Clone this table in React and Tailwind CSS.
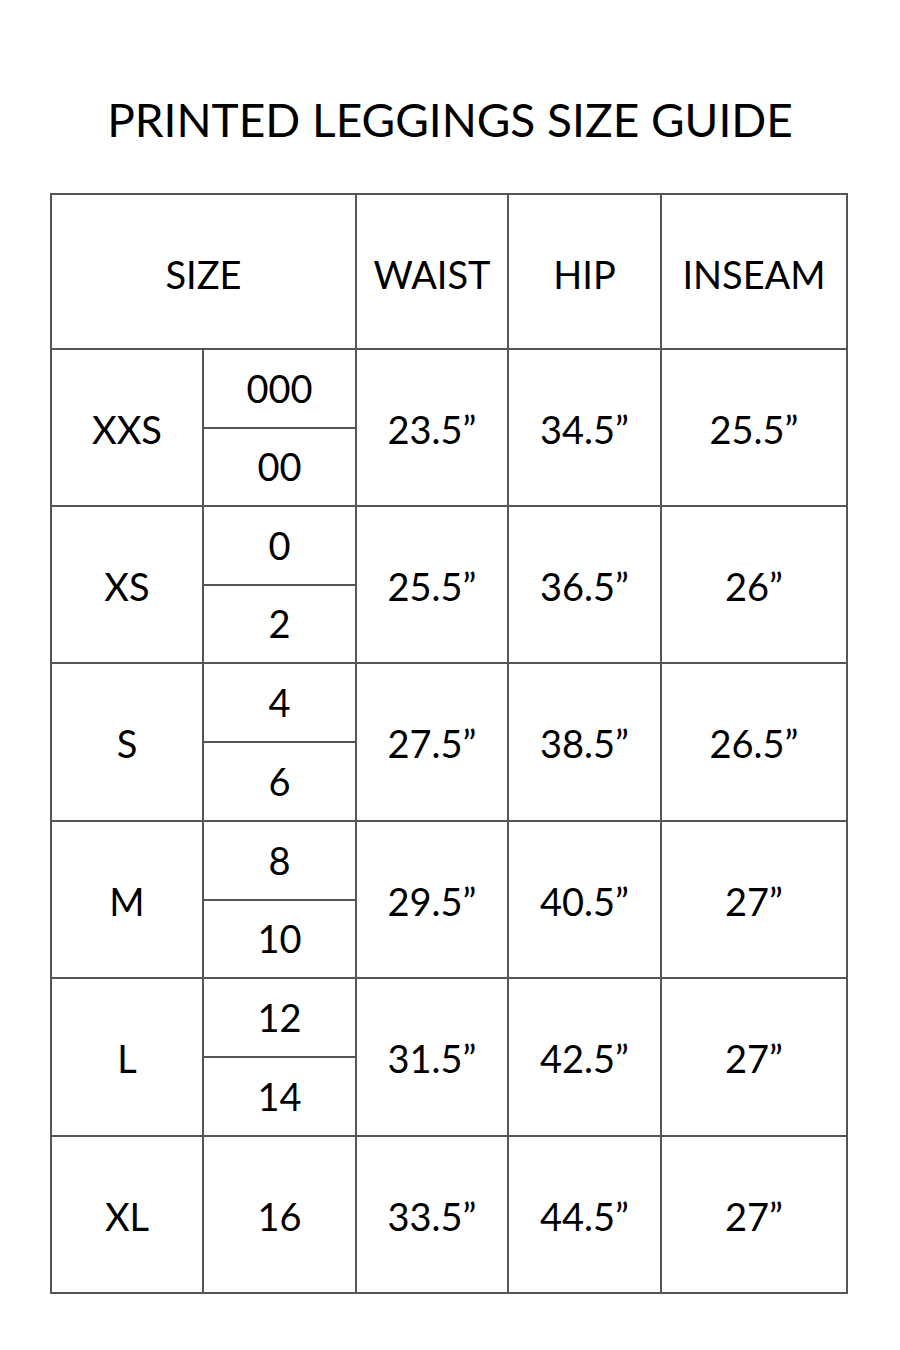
const groups = [
  { size: "XXS", subs: ["000", "00"], waist: "23.5”", hip: "34.5”", inseam: "25.5”" },
  { size: "XS", subs: ["0", "2"], waist: "25.5”", hip: "36.5”", inseam: "26”" },
  { size: "S", subs: ["4", "6"], waist: "27.5”", hip: "38.5”", inseam: "26.5”" },
  { size: "M", subs: ["8", "10"], waist: "29.5”", hip: "40.5”", inseam: "27”" },
  { size: "L", subs: ["12", "14"], waist: "31.5”", hip: "42.5”", inseam: "27”" },
  { size: "XL", subs: ["16"], waist: "33.5”", hip: "44.5”", inseam: "27”" },
];

function Cell({ children, className = "" }) {
  return (
    <div className={"bg-white flex items-center justify-center " + className}>
      {children}
    </div>
  );
}

export default function App() {
  return (
    <div
      className="w-[900px] h-[1350px] bg-white text-black flex flex-col items-center"
      style={{ fontFamily: "Lato, 'Open Sans', sans-serif" }}
    >
      <h1 className="mt-[97px] text-[46px] leading-none font-normal">
        PRINTED LEGGINGS SIZE GUIDE
      </h1>

      <div className="mt-[50px] ml-[-2px] grid grid-cols-[150px_151px_150px_151px_184px] grid-rows-[153px_77px_76px_77px_76px_77px_77px_77px_76px_77px_77px_77px_76px] gap-[2px] p-[2px] bg-[#555555] text-[38px] leading-none">
        <Cell className="col-span-2 pt-[4px]">SIZE</Cell>
        <Cell className="pt-[4px]">WAIST</Cell>
        <Cell className="pt-[4px]">HIP</Cell>
        <Cell className="pt-[4px]">INSEAM</Cell>

        {groups.map((g) => (
          <div key={g.size} className="contents">
            <Cell className="row-span-2 pt-[2px]">{g.size}</Cell>
            {g.subs.length === 2 ? (
              <>
                <Cell className="col-start-2 pb-[2px]">{g.subs[0]}</Cell>
                <Cell className="row-span-2 pt-[2px]">{g.waist}</Cell>
                <Cell className="row-span-2 pt-[2px]">{g.hip}</Cell>
                <Cell className="row-span-2 pt-[2px]">{g.inseam}</Cell>
                <Cell className="col-start-2 pb-[2px]">{g.subs[1]}</Cell>
              </>
            ) : (
              <>
                <Cell className="row-span-2 pt-[2px]">{g.subs[0]}</Cell>
                <Cell className="row-span-2 pt-[2px]">{g.waist}</Cell>
                <Cell className="row-span-2 pt-[2px]">{g.hip}</Cell>
                <Cell className="row-span-2 pt-[2px]">{g.inseam}</Cell>
              </>
            )}
          </div>
        ))}
      </div>
    </div>
  );
}
